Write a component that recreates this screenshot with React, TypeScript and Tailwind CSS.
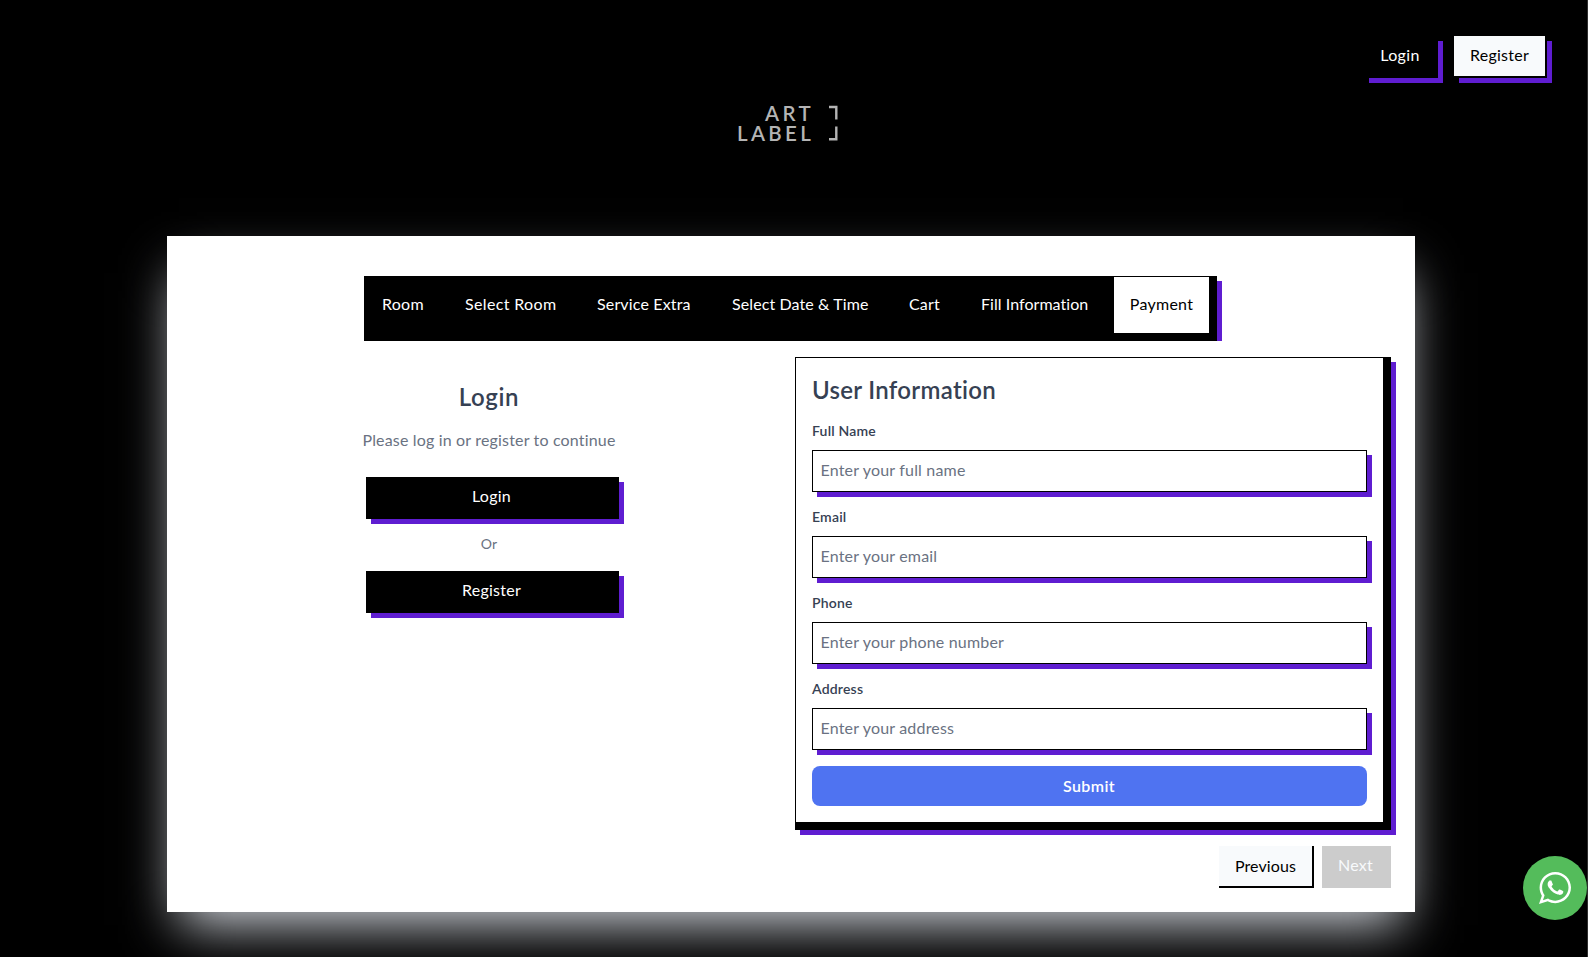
import React from "react";

const tabs = [
  { label: "Room", cls: "w-[83px] text-white tracking-[0.25px]" },
  { label: "Select Room", cls: "w-[132px] text-white tracking-[0.35px]" },
  { label: "Service Extra", cls: "w-[135px] text-white tracking-[0.15px]" },
  { label: "Select Date & Time", cls: "w-[177px] text-white tracking-[0.1px]" },
  { label: "Cart", cls: "w-[72px] text-white tracking-[0.15px]" },
  { label: "Fill Information", cls: "w-[149px] text-white tracking-[0.05px]" },
];

const fields = [
  { label: "Full Name", placeholder: "Enter your full name" },
  { label: "Email", placeholder: "Enter your email" },
  { label: "Phone", placeholder: "Enter your phone number" },
  { label: "Address", placeholder: "Enter your address" },
];

function Logo() {
  return (
    <svg width="110" height="50" viewBox="0 0 110 50" className="ml-[733px] mt-[21px] block" fill="#b4b4b4">
      <g fontFamily="Lato, sans-serif" fontWeight="600" fontSize="20.5">
        <text x="32" y="21.5" textLength="46">ART</text>
        <text x="4" y="41.5" textLength="74">LABEL</text>
      </g>
      <path d="M96 8h7.3V20.6M96 40.3h7.3V27.6" fill="none" stroke="#b4b4b4" strokeWidth="2.4" />
    </svg>
  );
}

function WhatsappIcon() {
  return (
    <svg width="32" height="32" viewBox="0 0 90 90" fill="currentColor">
      <path d="M90,43.841c0,24.213-19.779,43.841-44.182,43.841c-7.747,0-15.025-1.98-21.357-5.455L0,90l7.975-23.522c-4.023-6.606-6.34-14.354-6.34-22.637C1.635,19.628,21.416,0,45.818,0C70.223,0,90,19.628,90,43.841z M45.818,6.982c-20.484,0-37.146,16.535-37.146,36.859c0,8.065,2.629,15.534,7.076,21.61L11.107,79.14l14.275-4.537c5.865,3.851,12.891,6.097,20.437,6.097c20.481,0,37.146-16.533,37.146-36.857S66.301,6.982,45.818,6.982z M68.129,53.938c-0.273-0.447-0.994-0.717-2.076-1.254c-1.084-0.537-6.41-3.138-7.4-3.495c-0.993-0.358-1.717-0.538-2.438,0.537c-0.721,1.076-2.797,3.495-3.43,4.212c-0.632,0.719-1.263,0.809-2.347,0.271c-1.082-0.537-4.571-1.673-8.708-5.333c-3.219-2.848-5.393-6.364-6.025-7.441c-0.631-1.075-0.066-1.656,0.475-2.191c0.488-0.482,1.084-1.255,1.625-1.882c0.543-0.628,0.723-1.075,1.082-1.793c0.363-0.717,0.182-1.344-0.09-1.883c-0.27-0.537-2.438-5.825-3.34-7.977c-0.902-2.15-1.803-1.792-2.436-1.792c-0.631,0-1.354-0.09-2.076-0.09c-0.722,0-1.896,0.269-2.889,1.344c-0.992,1.076-3.789,3.676-3.789,8.963c0,5.288,3.879,10.397,4.422,11.113c0.541,0.716,7.49,11.92,18.5,16.223C58.2,65.771,58.2,64.336,60.186,64.156c1.984-0.179,6.406-2.599,7.312-5.107C68.398,56.537,68.398,54.386,68.129,53.938z" />
    </svg>
  );
}

export default function App() {
  return (
    <div className="relative h-[957px] w-full overflow-hidden border-r border-[#2f2f2f] bg-black font-[Lato,sans-serif] text-base tracking-[0.25px]">
      <header className="flex justify-end gap-4 pr-10 pt-9">
        <button className="h-[42px] w-[74px] bg-black pb-1 pr-0.5 tracking-[0.35px] text-white shadow-[5px_5px_0_#5f1dd1]">Login</button>
        <button className="h-[42px] w-[93px] border-b-2 border-r-2 border-black bg-slate-50 pb-0.5 text-black shadow-[5px_5px_0_#5f1dd1]">
          Register
        </button>
      </header>
      <Logo />

      <main className="ml-[167px] mt-[87px] h-[676px] w-[1248px] bg-white px-6 pt-10 shadow-2xl shadow-gray-300">
        <div className="ml-[173px] h-[65px] w-[858px] overflow-hidden">
          <nav className="flex h-[65px] w-[853px] border border-black bg-black pl-px shadow-[5px_5px_0_#5f1dd1]">
            {tabs.map((t) => (
              <button key={t.label} className={"h-14 shrink-0 whitespace-nowrap px-4 pb-0.5 text-left " + t.cls}>
                {t.label}
              </button>
            ))}
            <button className="h-14 w-[95px] shrink-0 bg-white pb-0.5 text-center text-black">Payment</button>
          </nav>
        </div>

        <div className="mt-4 flex justify-between">
          <section className="flex w-[596px] flex-col items-center pt-6 text-center">
            <h2 className="text-2xl font-semibold tracking-[0.6px] text-gray-700">Login</h2>
            <p className="mt-[15px] text-gray-500 tracking-[0.17px]">Please log in or register to continue</p>
            <button className="ml-[7px] mt-[25px] h-[42px] w-[253px] bg-black pb-1 pr-0.5 text-white shadow-[5px_5px_0_#5f1dd1]">
              Login
            </button>
            <span className="mb-[17px] mt-[15px] text-sm leading-5 text-gray-500">Or</span>
            <button className="ml-[7px] h-[42px] w-[253px] bg-black pb-1 pr-0.5 text-white shadow-[5px_5px_0_#5f1dd1]">
              Register
            </button>
          </section>

          <form className="h-[473px] w-[596px] border-b-8 border-l border-r-8 border-t border-black p-4 shadow-[5px_5px_0_#5f1dd1]">
            <h2 className="mb-[15px] text-2xl font-semibold tracking-[0.3px] text-gray-700">User Information</h2>
            {fields.map((f) => (
              <label key={f.label} className="mb-[15px] block">
                <span className="mb-[9px] block text-sm/5 font-semibold tracking-[0.2px] text-gray-700">{f.label}</span>
                <input
                  placeholder={f.placeholder}
                  className="block h-[42px] w-full border border-black pb-[3px] pl-[7.5px] pr-2 tracking-[0.18px] shadow-[5px_5px_0_#5f1dd1] placeholder:text-gray-500"
                />
              </label>
            ))}
            <button type="button" className="mt-px h-10 w-full rounded-lg bg-[#4f73f1] pb-px pr-px font-semibold tracking-[0.4px] text-white">
              Submit
            </button>
          </form>
        </div>

        <div className="mt-4 flex justify-end gap-2">
          <button className="h-[42px] w-[95px] border-b-2 border-r-2 border-black bg-slate-50 pb-px tracking-[0.12px] text-black">
            Previous
          </button>
          <button className="h-[42px] w-[69px] bg-[#ccc] pb-1 pr-0.5 text-slate-50">Next</button>
        </div>
      </main>

      <a className="absolute right-0 top-[856px] flex size-16 items-center justify-center rounded-full bg-[#54bc5b] text-white">
        <WhatsappIcon />
      </a>
    </div>
  );
}
